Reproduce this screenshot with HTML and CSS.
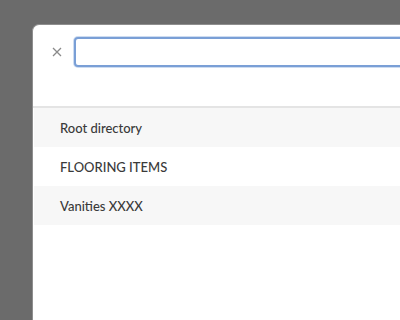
FILE: index.html
```html
<!DOCTYPE html>
<html lang="en">
<head>
    <meta charset="utf-8" />
    <title>Move to folder</title>
    <link rel="stylesheet" href="styles.css">
</head>
<body>
    <div class="dialog">
        <div class="dialog-header">
            <button class="close-btn" aria-label="Close">
                <svg width="10" height="10" viewBox="0 0 10 10">
                    <path d="M1 1 L9 9 M9 1 L1 9" stroke="#8a8a8a" stroke-width="1.3" fill="none" />
                </svg>
            </button>
            <input type="text" class="search" />
        </div>
        <ul class="folder-list">
            <li class="folder">Root directory</li>
            <li class="folder">FLOORING ITEMS</li>
            <li class="folder">Vanities XXXX</li>
        </ul>
    </div>
</body>
</html>
```

FILE: styles.css
```css
html, body {
    margin: 0;
    height: 100%;
    overflow: hidden;
}

body {
    background-color: #6b6b6b;
    font-family: Lato, "Open Sans", sans-serif;
    color: #3a3a3a;
}

.dialog {
    box-sizing: border-box;
    margin: 24px 0 0 32px;
    height: calc(100% - 24px);
    background-color: #fff;
    border-top: 1px solid #8e8e8e;
    border-left: 1px solid #8e8e8e;
    border-radius: 7px 0 0 0;
    overflow: hidden;
}

.dialog-header {
    display: flex;
    align-items: flex-start;
    gap: 10px;
    padding: 12px 0 0 17px;
    height: 69px;
    border-bottom: 2px solid #e4e4e4;
}

.close-btn {
    width: 14px;
    height: 30px;
    padding: 0;
    border: none;
    background: none;
    display: flex;
    align-items: center;
    justify-content: center;
}

.search {
    box-sizing: border-box;
    flex: 1;
    min-width: 0;
    height: 30px;
    margin-right: -10px;
    border: 2px solid #7a9fd6;
    border-radius: 4px;
    box-shadow: 0 0 0 1px #cddcf1;
    outline: none;
}

.folder-list {
    list-style: none;
    margin: 0;
    padding: 0 0 0 1px;
}

.folder {
    height: 39px;
    line-height: 40px;
    padding-left: 26px;
    font-size: 13px;
    font-weight: 500;
}

.folder:nth-child(odd) {
    background-color: #f7f7f7;
}
```
